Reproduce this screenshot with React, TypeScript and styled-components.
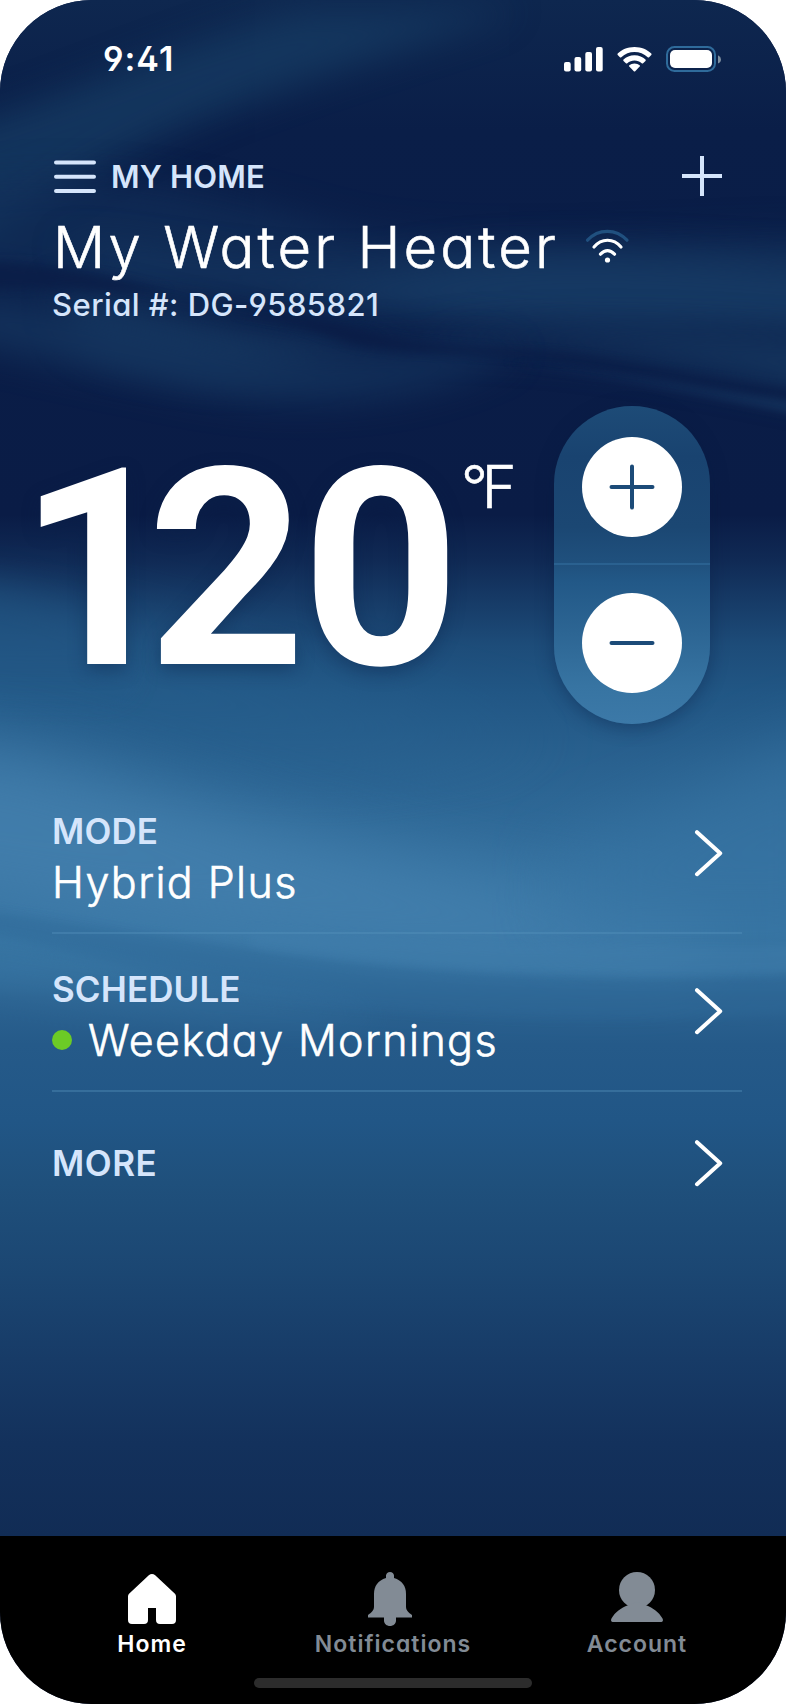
import React from 'react';
import styled, { createGlobalStyle, css } from 'styled-components';

const ice = '#d5e5fb';
const muted = '#828b95';

const GlobalStyle = createGlobalStyle`
  * { box-sizing: border-box; }
  body {
    margin: 0;
    background: #fff;
    color: #fff;
    font-family: Inter, 'Liberation Sans', sans-serif;
    font-feature-settings: 'cv11', 'ss01';
  }
  svg { display: block; flex: none; }
  button {
    padding: 0;
    border: 0;
    background: none;
    color: inherit;
    font: inherit;
    font-feature-settings: inherit;
  }
`;

/* Light weight thickened a little, between the 300 and 400 cuts. */
const bookWeight = css`
  font-weight: 300;
  -webkit-text-stroke: 0.6px #fff;
`;

const Screen = styled.div`
  position: relative;
  display: flex;
  flex-direction: column;
  width: 786px;
  height: 1704px;
  border-radius: 92px;
  overflow: hidden;
  background: #0a1d47;
`;

const Backdrop = styled.svg`
  position: absolute;
  inset: 0;
`;

const Content = styled.main`
  position: relative;
  display: flex;
  flex-direction: column;
  height: 1536px;
`;

const StatusBar = styled.div`
  display: flex;
  align-items: center;
  justify-content: space-between;
  height: 118px;
  padding: 0 65px 0 103px;
`;

const Clock = styled.span`
  font-size: 34px;
  font-weight: 600;
  letter-spacing: 1px;
  line-height: 40px;
`;

const StatusIcons = styled.div`
  display: flex;
  align-items: center;
  gap: 14px;
`;

const Header = styled.header`
  display: flex;
  flex-direction: column;
  height: 288px;
  padding: 34px 64px 0 53px;
`;

const TopRow = styled.div`
  display: flex;
  align-items: center;
  justify-content: space-between;
  height: 48px;
`;

const MenuButton = styled.button`
  display: flex;
  align-items: center;
  gap: 14px;
  color: ${ice};
  font-size: 31px;
  font-weight: 600;
  letter-spacing: 0.15px;
`;

const TitleRow = styled.div`
  display: flex;
  align-items: center;
  gap: 26px;
  height: 70px;
  margin-top: 12px;
`;

const Title = styled.h1`
  ${bookWeight}
  margin: 0;
  font-size: 58px;
  line-height: 70px;
  letter-spacing: 3.1px;
  white-space: nowrap;
`;

const Serial = styled.div`
  margin: 3px 0 0 -1px;
  color: ${ice};
  font-size: 31px;
  font-weight: 500;
  line-height: 40px;
  letter-spacing: 0.45px;
`;

const Thermostat = styled.section`
  display: flex;
  align-items: flex-start;
  height: 370px;
`;

const Reading = styled.div`
  display: flex;
  width: 554px;
  padding-left: 18px;
`;

const Temperature = styled.div`
  width: 437px;
  padding-top: 4px;
  font-family: Roboto, 'Liberation Sans', sans-serif;
  font-size: 276px;
  font-weight: 700;
  line-height: 320px;
  letter-spacing: -4px;
  white-space: nowrap;
  text-shadow: 0 6px 18px rgba(10, 32, 72, 0.4);
`;

const LeadDigit = styled.span`
  letter-spacing: -29px;
`;

const Unit = styled.div`
  ${bookWeight}
  padding: 45px 0 0 6px;
  font-size: 59px;
  line-height: 72px;
  letter-spacing: -6px;
`;

const Stepper = styled.div`
  display: flex;
  flex-direction: column;
  width: 156px;
  height: 318px;
  border-radius: 78px;
  background: linear-gradient(
    180deg,
    #1d4b77 0%,
    #194370 16%,
    #1b4773 38%,
    #20517e 50%,
    #225887 55%,
    #2d6694 72%,
    #3774a2 88%,
    #3c79a8 100%
  );
  box-shadow: 0 4px 18px rgba(9, 27, 66, 0.38);
`;

const StepZone = styled.div<{ $upper?: boolean }>`
  display: flex;
  flex: 1;
  justify-content: center;
  ${p =>
    p.$upper
      ? css`
          flex: 0 0 159px;
          padding-top: 31px;
          border-bottom: 2px solid #2a6190;
        `
      : css`
          padding-top: 28px;
        `}
`;

const StepButton = styled.button`
  display: flex;
  align-items: center;
  justify-content: center;
  width: 100px;
  height: 100px;
  border-radius: 50%;
  background: #fff;
`;

const List = styled.nav`
  display: flex;
  flex-direction: column;
  padding: 0 44px 0 52px;
`;

const Row = styled.div<{ $last?: boolean }>`
  display: flex;
  align-items: center;
  justify-content: space-between;
  height: ${p => (p.$last ? 143 : 158)}px;
  padding-right: 18px;
  border-bottom: ${p => (p.$last ? '0' : '2px solid rgba(88, 146, 190, 0.38)')};
`;

const RowText = styled.div`
  display: flex;
  flex-direction: column;
  padding-top: 13px;
`;

const Label = styled.div`
  color: ${ice};
  font-size: 35px;
  font-weight: 600;
  line-height: 42px;
  letter-spacing: 0.1px;
`;

const SoloLabel = styled(Label)`
  padding-bottom: 2px;
  letter-spacing: 0.5px;
`;

const Value = styled.div`
  ${bookWeight}
  display: flex;
  align-items: center;
  gap: 16px;
  font-size: 43px;
  line-height: 60px;
  letter-spacing: 1.4px;
`;

const ActiveDot = styled.span`
  width: 20px;
  height: 20px;
  border-radius: 50%;
  background: #6ccb26;
`;

const TabBar = styled.footer`
  position: relative;
  display: flex;
  flex-direction: column;
  align-items: center;
  height: 168px;
  background: #000;
`;

const Tabs = styled.div`
  display: grid;
  grid-template-columns: 250px 226px 268px;
  width: 786px;
  height: 142px;
  padding-left: 27px;
`;

const Tab = styled.button<{ $active?: boolean }>`
  display: flex;
  flex-direction: column;
  align-items: center;
  padding-top: 34px;
  color: ${p => (p.$active ? '#fff' : muted)};
  font-size: 23px;
  font-weight: 600;
  line-height: 32px;
  letter-spacing: 1px;
`;

const TabLabel = styled.span<{ $indent?: number }>`
  padding-left: ${p => p.$indent ?? 0}px;
`;

const HomeIndicator = styled.div`
  width: 278px;
  height: 10px;
  border-radius: 5px;
  background: #2c2c2c;
`;

const Waves = () => (
  <Backdrop width="786" height="1536" viewBox="0 0 786 1536" aria-hidden="true">
    <defs>
      <linearGradient id="depth" gradientUnits="userSpaceOnUse" x1="0" y1="0" x2="0" y2="1536">
        <stop offset="0" stopColor="#0e274f" />
        <stop offset="0.085" stopColor="#0a1e48" />
        <stop offset="0.335" stopColor="#0a1c46" />
        <stop offset="0.365" stopColor="#102a55" />
        <stop offset="0.39" stopColor="#163a66" />
        <stop offset="0.42" stopColor="#1d4c79" />
        <stop offset="0.45" stopColor="#215684" />
        <stop offset="0.5" stopColor="#2a6290" />
        <stop offset="0.555" stopColor="#326d9b" />
        <stop offset="0.605" stopColor="#3775a3" />
        <stop offset="0.63" stopColor="#34709e" />
        <stop offset="0.65" stopColor="#2c6391" />
        <stop offset="0.68" stopColor="#255a89" />
        <stop offset="0.73" stopColor="#215686" />
        <stop offset="0.77" stopColor="#1f507c" />
        <stop offset="0.83" stopColor="#1b4672" />
        <stop offset="0.885" stopColor="#173b67" />
        <stop offset="0.94" stopColor="#13315c" />
        <stop offset="1" stopColor="#112c55" />
      </linearGradient>
      <filter id="soft6" x="-30%" y="-60%" width="160%" height="220%" colorInterpolationFilters="sRGB"><feGaussianBlur stdDeviation="5" /></filter>
      <filter id="soft18" x="-30%" y="-60%" width="160%" height="220%" colorInterpolationFilters="sRGB"><feGaussianBlur stdDeviation="18" /></filter>
      <filter id="soft35" x="-40%" y="-80%" width="180%" height="260%" colorInterpolationFilters="sRGB"><feGaussianBlur stdDeviation="34" /></filter>
    </defs>
    <rect width="786" height="1536" fill="url(#depth)" />

    {/* pale swells behind the header */}
    <path d="M-60 130C60 100 150 50 300 10H520C340 70 190 110 60 190L-60 270Z" fill="#153961" filter="url(#soft18)" opacity="0.85" />
    <path d="M-60 270V190C100 160 200 190 330 225S650 235 850 235V290H60Z" fill="#122f59" filter="url(#soft18)" opacity="0.7" />
    <path d="M60 245C200 260 300 285 420 265S700 255 850 268V335C700 325 600 330 470 320S260 285 130 275Z" fill="#163963" filter="url(#soft18)" />
    <path d="M60 290C180 315 270 345 400 342S650 355 850 400V345C700 330 600 330 480 335S300 385 190 370 70 345 60 290Z" fill="#15365f" filter="url(#soft18)" />
    <path d="M-40 295C60 300 160 330 260 350S400 345 520 350C440 400 300 412 190 390S40 360 -40 340Z" fill="#14345e" filter="url(#soft18)" opacity="0.85" />

    {/* dark creases */}
    <path d="M-20 262C50 262 110 276 170 292 100 294 30 284 -20 290Z" fill="#0a1c46" filter="url(#soft6)" opacity="0.75" />
    <path d="M230 312C280 318 315 330 345 342S500 352 570 362 700 385 800 400V392C700 380 620 360 560 354S430 348 390 337 310 314 230 312Z" fill="#0a1c46" filter="url(#soft6)" opacity="0.85" />
    <path d="M500 362C600 372 690 392 800 414V404C700 390 600 370 500 362Z" fill="#1b416b" filter="url(#soft6)" opacity="0.6" />

    {/* bright water on the left, settling towards the right */}
    <path d="M-80 600C40 600 130 620 240 650S420 715 560 740L330 770 -80 735Z" fill="#28618f" filter="url(#soft35)" opacity="0.45" />
    <path d="M-80 580C0 580 60 600 120 630V685H-80Z" fill="#225583" filter="url(#soft18)" opacity="0.5" />
    <path d="M-100 735C20 735 120 780 260 820S600 905 700 908V960C500 970 250 950 -100 890Z" fill="#4480ae" filter="url(#soft35)" opacity="0.85" />
    <path d="M560 850C660 820 740 760 850 730V930H560Z" fill="#3774a3" filter="url(#soft35)" opacity="0.7" />

    {/* fold under the bright band */}
    <path d="M-30 908C60 922 140 932 230 946S480 985 850 980V1010C600 1030 320 1010 220 990S60 945 -30 932Z" fill="#2e6897" filter="url(#soft6)" opacity="0.5" />
    <path d="M-30 935C90 950 190 980 330 1000L390 1020C230 1025 80 1005 -30 985Z" fill="#3774a2" filter="url(#soft18)" opacity="0.45" />
    <path d="M250 930C400 940 560 950 850 945V970C620 985 400 970 250 946Z" fill="#417eac" filter="url(#soft6)" opacity="0.45" />
  </Backdrop>
);

const SignalIcon = () => (
  <svg width="39" height="26" viewBox="0 0 39 26" fill="#fff">
    <rect x="0" y="16" width="6.7" height="9.6" rx="2" />
    <rect x="10.5" y="11" width="6.7" height="14.6" rx="2" />
    <rect x="21.3" y="6" width="6.7" height="19.6" rx="2" />
    <rect x="32" y="1" width="6.7" height="24.6" rx="2" />
  </svg>
);

const StatusWifiIcon = () => (
  <svg width="35" height="26" viewBox="0 0 35 26" fill="#fff">
    <path d="M17.5 1C24.5 1 30.5 3.8 34.3 7.6Q34.9 8.3 34.3 9L32.1 11.2Q31.4 11.8 30.7 11.2C27 7.9 22.5 6.1 17.5 6.1S8 7.9 4.3 11.2Q3.6 11.8 2.9 11.2L.7 9Q.1 8.3 .7 7.6C4.5 3.8 10.5 1 17.5 1Z" />
    <path d="M17.5 9.2C22 9.2 25.7 10.9 28.5 13.5Q29.1 14.2 28.5 14.9L26.1 17.2Q25.4 17.8 24.7 17.2C22.6 15.4 20.2 14.4 17.5 14.4S12.4 15.4 10.3 17.2Q9.6 17.8 8.9 17.2L6.5 14.9Q5.9 14.2 6.5 13.5C9.3 10.9 13 9.2 17.5 9.2Z" />
    <path d="M17.5 17.4Q20.6 17.4 22.7 19.3Q23.3 19.9 22.7 20.6L18.2 25.2Q17.5 25.8 16.8 25.2L12.3 20.6Q11.7 19.9 12.3 19.3Q14.4 17.4 17.5 17.4Z" />
  </svg>
);

const BatteryIcon = () => (
  <svg width="55" height="26" viewBox="0 0 55 26">
    <rect x="1" y="1" width="48" height="24" rx="7.5" fill="none" stroke="#2f6b9b" strokeWidth="2" />
    <rect x="4" y="4" width="42" height="18" rx="5" fill="#fff" />
    <path d="M52 9.2Q55 10.6 55 13.4T52 17.4Z" fill="#7f8f9f" />
  </svg>
);

const MenuIcon = () => (
  <svg width="44" height="36" viewBox="0 0 44 36" stroke={ice} strokeWidth="4" strokeLinecap="round">
    <path d="M3 4.5H41M3 18.7H41M3 33H41" />
  </svg>
);

const PlusIcon = () => (
  <svg width="40" height="40" viewBox="0 0 40 40" stroke={ice} strokeWidth="4">
    <path d="M0 20H40M20 0V40" />
  </svg>
);

const DeviceWifiIcon = () => (
  <svg width="46" height="36" viewBox="0 0 46 36" fill="none" strokeWidth="3.2" strokeLinecap="round">
    <path d="M2.5 11.2C13.5 -0.6 31 -0.6 42 11.2" stroke="#20507f" />
    <path d="M9 18C16.5 9 28.5 9 36 18" stroke="#fff" />
    <path d="M15.5 25.2Q22.5 18 29.5 25.2" stroke="#fff" />
    <circle cx="22.5" cy="31" r="2.6" fill="#fff" />
  </svg>
);

const StepIcon = ({ add }: { add?: boolean }) => (
  <svg width="46" height="46" viewBox="0 0 46 46" stroke="#1c4b78" strokeWidth="4" strokeLinecap="round">
    <path d={add ? 'M2.5 23H43.5M23 2.5V43.5' : 'M2.5 23H43.5'} />
  </svg>
);

const Chevron = () => (
  <svg width="30" height="48" viewBox="0 0 30 48" fill="none" stroke="#fff" strokeWidth="4" strokeLinecap="round" strokeLinejoin="round">
    <path d="M3 2.2L26.2 23.2L3 44.2" />
  </svg>
);

const HomeIcon = () => (
  <svg width="56" height="58" viewBox="0 0 56 58" fill="#fff">
    <path d="M24.8 5.2Q28 2.8 31.2 5.2L51.2 24Q52 25 52 26.5V50Q52 54 48 54H36Q32 54 32 50V38H24V50Q24 54 20 54H8Q4 54 4 50V26.5Q4 25 4.8 24Z" />
  </svg>
);

const BellIcon = () => (
  <svg width="56" height="58" viewBox="0 0 56 58" fill={muted}>
    <path d="M24 5.5Q24.5 2 28 2T32 5.5V8C40 10.5 44 16 44 24V36.5C44 40.5 46.5 42.5 50 45V47.5H34V50.5C34 53.8 31.2 56 28 56S22 53.8 22 50.5V47.5H6V45C9.5 42.5 12 40.5 12 36.5V24C12 16 16 10.5 24 8Z" />
  </svg>
);

const AccountIcon = () => (
  <svg width="56" height="58" viewBox="0 0 56 58" fill={muted}>
    <circle cx="28" cy="20" r="18" />
    <path d="M3.5 52C1.8 52 1.7 49.9 2.6 48.3C6 42.5 12 37.7 19 35.3L28 32L37 35.3C44 37.7 50 42.5 53.4 48.3C54.3 49.9 54.2 52 52.5 52Z" />
  </svg>
);

export default function App() {
  return (
    <>
      <GlobalStyle />
      <Screen>
        <Waves />
        <Content>
          <StatusBar>
            <Clock>9:41</Clock>
            <StatusIcons>
              <SignalIcon />
              <StatusWifiIcon />
              <BatteryIcon />
            </StatusIcons>
          </StatusBar>

          <Header>
            <TopRow>
              <MenuButton>
                <MenuIcon />
                MY HOME
              </MenuButton>
              <PlusIcon />
            </TopRow>
            <TitleRow>
              <Title>My Water Heater</Title>
              <DeviceWifiIcon />
            </TitleRow>
            <Serial>Serial #: DG-9585821</Serial>
          </Header>

          <Thermostat>
            <Reading>
              <Temperature>
                <LeadDigit>1</LeadDigit>20
              </Temperature>
              <Unit>°F</Unit>
            </Reading>
            <Stepper>
              <StepZone $upper>
                <StepButton aria-label="Raise temperature">
                  <StepIcon add />
                </StepButton>
              </StepZone>
              <StepZone>
                <StepButton aria-label="Lower temperature">
                  <StepIcon />
                </StepButton>
              </StepZone>
            </Stepper>
          </Thermostat>

          <List>
            <Row>
              <RowText>
                <Label>MODE</Label>
                <Value>Hybrid Plus</Value>
              </RowText>
              <Chevron />
            </Row>
            <Row>
              <RowText>
                <Label>SCHEDULE</Label>
                <Value>
                  <ActiveDot />
                  Weekday Mornings
                </Value>
              </RowText>
              <Chevron />
            </Row>
            <Row $last>
              <SoloLabel>MORE</SoloLabel>
              <Chevron />
            </Row>
          </List>
        </Content>

        <TabBar>
          <Tabs>
            <Tab $active>
              <HomeIcon />
              <TabLabel>Home</TabLabel>
            </Tab>
            <Tab>
              <BellIcon />
              <TabLabel $indent={6}>Notifications</TabLabel>
            </Tab>
            <Tab>
              <AccountIcon />
              <TabLabel>Account</TabLabel>
            </Tab>
          </Tabs>
          <HomeIndicator />
        </TabBar>
      </Screen>
    </>
  );
}
